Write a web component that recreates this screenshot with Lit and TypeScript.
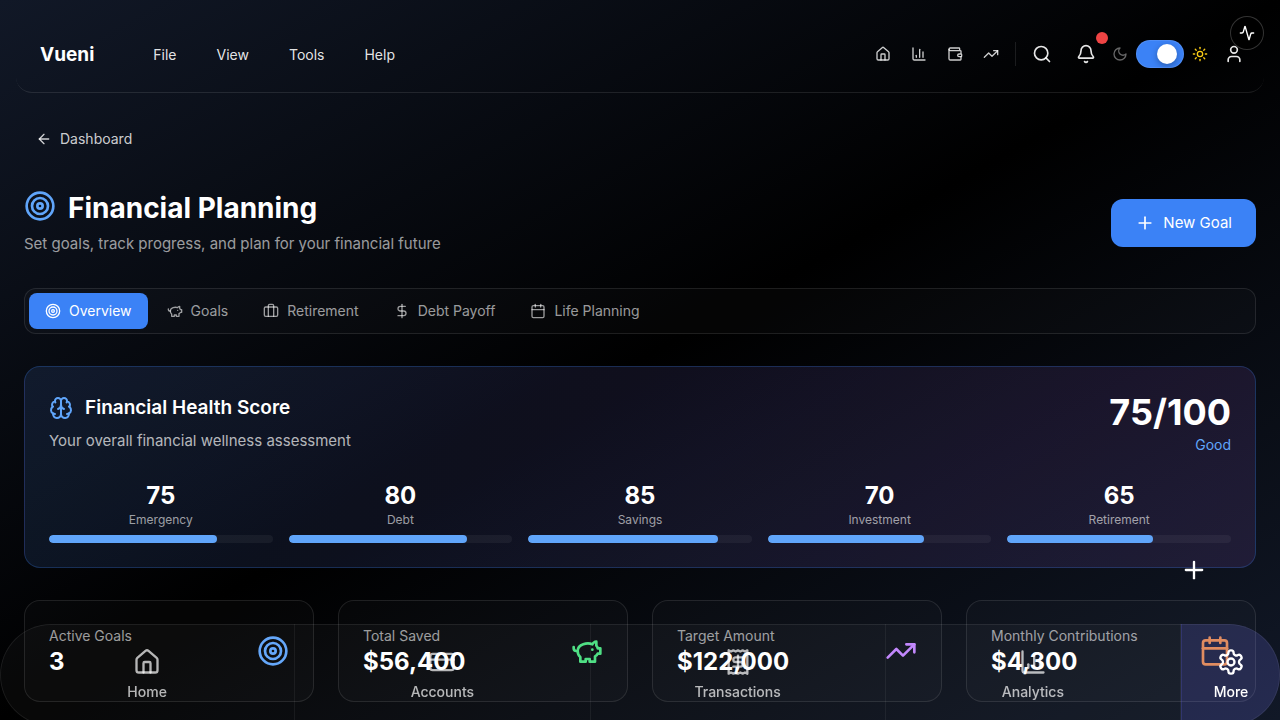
import { LitElement, html, css, svg } from "lit";
import { customElement, property, state } from "lit/decorators.js";
import { styleMap } from "lit/directives/style-map.js";
import { classMap } from "lit/directives/class-map.js";

const target = svg`<circle cx="12" cy="12" r="10"/><circle cx="12" cy="12" r="6"/><circle cx="12" cy="12" r="2"/>`;
const piggy = svg`<path d="M19 5c-1.5 0-2.8 1.4-3 2-3.5-1.5-11-.3-11 5 0 1.8 0 3 2 4.5V20h4v-2h3v2h4v-4c1-.5 1.7-1 2-2h2v-4h-2c0-1-.5-1.5-1-2V5z"/><path d="M2 9v1c0 1.1.9 2 2 2h1"/><path d="M16 11h.01"/>`;
const calendar = svg`<path d="M8 2v4"/><path d="M16 2v4"/><rect width="18" height="18" x="3" y="4" rx="2"/><path d="M3 10h18"/>`;

const ICONS: Record<string, unknown> = {
  target,
  piggy,
  calendar,
  home: svg`<path d="M15 21v-8a1 1 0 0 0-1-1h-4a1 1 0 0 0-1 1v8"/><path d="M3 10a2 2 0 0 1 .709-1.528l7-5.999a2 2 0 0 1 2.582 0l7 5.999A2 2 0 0 1 21 10v9a2 2 0 0 1-2 2H5a2 2 0 0 1-2-2z"/>`,
  chart: svg`<path d="M3 3v16a2 2 0 0 0 2 2h16"/><path d="M18 17V9"/><path d="M13 17V5"/><path d="M8 17v-3"/>`,
  wallet: svg`<path d="M19 7V4a1 1 0 0 0-1-1H5a2 2 0 0 0 0 4h15a1 1 0 0 1 1 1v4h-3a2 2 0 0 0 0 4h3a1 1 0 0 0 1-1v-2a1 1 0 0 0-1-1"/><path d="M3 5v14a2 2 0 0 0 2 2h15a1 1 0 0 0 1-1v-4"/>`,
  trend: svg`<polyline points="22 7 13.5 15.5 8.5 10.5 2 17"/><polyline points="16 7 22 7 22 13"/>`,
  search: svg`<circle cx="11" cy="11" r="8"/><path d="m21 21-4.3-4.3"/>`,
  bell: svg`<path d="M10.268 21a2 2 0 0 0 3.464 0"/><path d="M3.262 15.326A1 1 0 0 0 4 17h16a1 1 0 0 0 .74-1.673C19.41 13.956 18 12.499 18 8A6 6 0 0 0 6 8c0 4.499-1.411 5.956-2.738 7.326"/>`,
  moon: svg`<path d="M12 3a6 6 0 0 0 9 9 9 9 0 1 1-9-9Z"/>`,
  sun: svg`<circle cx="12" cy="12" r="4"/><path d="M12 2v2"/><path d="M12 20v2"/><path d="m4.93 4.93 1.41 1.41"/><path d="m17.66 17.66 1.41 1.41"/><path d="M2 12h2"/><path d="M20 12h2"/><path d="m6.34 17.66-1.41 1.41"/><path d="m19.07 4.93-1.41 1.41"/>`,
  user: svg`<path d="M19 21v-2a4 4 0 0 0-4-4H9a4 4 0 0 0-4 4v2"/><circle cx="12" cy="7" r="4"/>`,
  activity: svg`<path d="M22 12h-2.48a2 2 0 0 0-1.93 1.46l-2.35 8.36a.25.25 0 0 1-.48 0L9.24 2.18a.25.25 0 0 0-.48 0l-2.35 8.36A2 2 0 0 1 4.49 12H2"/>`,
  back: svg`<path d="m12 19-7-7 7-7"/><path d="M19 12H5"/>`,
  plus: svg`<path d="M5 12h14"/><path d="M12 5v14"/>`,
  briefcase: svg`<path d="M16 20V4a2 2 0 0 0-2-2h-4a2 2 0 0 0-2 2v16"/><rect width="20" height="14" x="2" y="6" rx="2"/>`,
  dollar: svg`<path d="M12 2v20"/><path d="M17 5H9.5a3.5 3.5 0 0 0 0 7h5a3.5 3.5 0 0 1 0 7H6"/>`,
  brain: svg`<path d="M12 5a3 3 0 1 0-5.997.125 4 4 0 0 0-2.526 5.77 4 4 0 0 0 .556 6.588A4 4 0 1 0 12 18Z"/><path d="M12 5a3 3 0 1 1 5.997.125 4 4 0 0 1 2.526 5.77 4 4 0 0 1-.556 6.588A4 4 0 1 1 12 18Z"/><path d="M15 13a4.5 4.5 0 0 1-3-4 4.5 4.5 0 0 1-3 4"/><path d="M17.599 6.5a3 3 0 0 0 .399-1.375"/><path d="M6.003 5.125A3 3 0 0 0 6.401 6.5"/><path d="M3.477 10.896a4 4 0 0 1 .585-.396"/><path d="M19.938 10.5a4 4 0 0 1 .585.396"/><path d="M6 18a4 4 0 0 1-1.967-.516"/><path d="M19.967 17.484A4 4 0 0 1 18 18"/>`,
  card: svg`<rect width="20" height="14" x="2" y="5" rx="2"/><path d="M2 10h20"/>`,
  receipt: svg`<path d="M4 2v20l2-1 2 1 2-1 2 1 2-1 2 1 2-1 2 1V2l-2 1-2-1-2 1-2-1-2 1-2-1-2 1Z"/><path d="M16 8h-6a2 2 0 1 0 0 4h4a2 2 0 1 1 0 4H8"/><path d="M12 17.5v-11"/>`,
  settings: svg`<path d="M12.22 2h-.44a2 2 0 0 0-2 2v.18a2 2 0 0 1-1 1.73l-.43.25a2 2 0 0 1-2 0l-.15-.08a2 2 0 0 0-2.73.73l-.22.38a2 2 0 0 0 .73 2.73l.15.1a2 2 0 0 1 1 1.72v.51a2 2 0 0 1-1 1.74l-.15.09a2 2 0 0 0-.73 2.73l.22.38a2 2 0 0 0 2.73.73l.15-.08a2 2 0 0 1 2 0l.43.25a2 2 0 0 1 1 1.73V20a2 2 0 0 0 2 2h.44a2 2 0 0 0 2-2v-.18a2 2 0 0 1 1-1.73l.43-.25a2 2 0 0 1 2 0l.15.08a2 2 0 0 0 2.73-.73l.22-.39a2 2 0 0 0-.73-2.73l-.15-.08a2 2 0 0 1-1-1.74v-.5a2 2 0 0 1 1-1.74l.15-.09a2 2 0 0 0 .73-2.73l-.22-.38a2 2 0 0 0-2.73-.73l-.15.08a2 2 0 0 1-2 0l-.43-.25a2 2 0 0 1-1-1.73V4a2 2 0 0 0-2-2z"/><circle cx="12" cy="12" r="3"/>`,
};

@customElement("line-icon")
class LineIcon extends LitElement {
  @property() name = "";
  @property({ type: Number }) size = 16;

  static styles = css`
    :host { display: inline-flex; flex: none; }
    svg {
      display: block;
      fill: none;
      stroke: currentColor;
      stroke-width: 2;
      stroke-linecap: round;
      stroke-linejoin: round;
    }
  `;

  render() {
    return html`<svg width=${this.size} height=${this.size} viewBox="0 0 24 24" aria-hidden="true">${ICONS[this.name]}</svg>`;
  }
}

const MENUS = ["File", "View", "Tools", "Help"];
const SHORTCUTS = [
  ["home", "Home"],
  ["chart", "Analytics"],
  ["wallet", "Accounts"],
  ["trend", "Trends"],
];
const TABS = [
  ["target", "Overview"],
  ["piggy", "Goals"],
  ["briefcase", "Retirement"],
  ["dollar", "Debt Payoff"],
  ["calendar", "Life Planning"],
];
const METRICS: [string, number][] = [
  ["Emergency", 75],
  ["Debt", 80],
  ["Savings", 85],
  ["Investment", 70],
  ["Retirement", 65],
];
const STATS = [
  ["Active Goals", "3", "target", "blue"],
  ["Total Saved", "$56,400", "piggy", "green"],
  ["Target Amount", "$122,000", "trend", "purple"],
  ["Monthly Contributions", "$4,300", "calendar", "orange"],
];
const DOCK = [
  ["home", "Home"],
  ["card", "Accounts"],
  ["receipt", "Transactions"],
  ["chart", "Analytics"],
];

@customElement("app-root")
class AppRoot extends LitElement {
  @state() private tab = "Overview";
  @state() private light = true;

  static styles = css`
    :host {
      display: block;
      min-height: 100vh;
      box-sizing: border-box;
      color: #fff;
      font-family: Inter, "Liberation Sans", sans-serif;
      font-size: 14px;
      line-height: 20px;
      background: linear-gradient(to bottom right, #111827, #000 50%, #111827);
    }
    *, *::before { box-sizing: border-box; }
    h1, h2, p, dl, dd, dt { margin: 0; }
    button {
      display: inline-flex;
      align-items: center;
      justify-content: center;
      padding: 0;
      border: 0;
      background: none;
      color: inherit;
      font: inherit;
      cursor: pointer;
    }
    a { color: inherit; text-decoration: none; }

    .bar {
      display: flex;
      align-items: center;
      justify-content: space-between;
      margin: 0 16px;
      padding: 32px 8px 16px 24px;
      border-bottom: 1px solid rgba(255, 255, 255, 0.1);
      border-radius: 0 0 16px 16px;
    }
    .left, .menus, .right, .shortcuts, .theme { display: flex; align-items: center; }
    .left { gap: 43px; padding-top: 2px; }
    .brand { font-size: 19px; line-height: 28px; font-weight: 700; }
    .menus { gap: 8px; }
    .menus button { height: 36px; padding: 0 16px; color: rgba(255, 255, 255, 0.9); }
    .shortcuts { gap: 4px; padding-right: 8px; margin-right: 4px; border-right: 1px solid rgba(255, 255, 255, 0.1); height: 24px; }
    .shortcuts button { width: 32px; height: 32px; color: rgba(255, 255, 255, 0.8); }
    .square { position: relative; width: 44px; height: 44px; color: rgba(255, 255, 255, 0.9); }
    .dot { position: absolute; top: 0; right: 0; width: 12px; height: 12px; border-radius: 6px; background: #ef4444; }
    .theme { gap: 8px; padding: 0 4px; }
    .moon { color: rgba(255, 255, 255, 0.4); }
    .sun { color: #facc15; }
    .switch {
      appearance: none;
      display: flex;
      align-items: center;
      width: 48px;
      height: 28px;
      margin: 0;
      padding: 0 4px;
      border: 1px solid rgba(255, 255, 255, 0.1);
      border-radius: 14px;
      background: #374151;
    }
    .switch:checked { background: #3b82f6; justify-content: flex-end; padding-right: 6px; }
    .switch::before { content: ""; width: 20px; height: 20px; border-radius: 10px; background: #fff; box-shadow: 0 2px 6px rgba(0, 0, 0, 0.3); }
    .pulse {
      position: fixed;
      top: 16px;
      right: 16px;
      width: 34px;
      height: 34px;
      border: 1px solid rgba(255, 255, 255, 0.2);
      border-radius: 17px;
      background: #000;
    }

    main { padding: 28px 24px 18px; }
    .back { display: flex; width: fit-content; align-items: center; gap: 8px; height: 36px; padding: 0 12px; color: rgba(255, 255, 255, 0.8); }
    .head { display: flex; align-items: center; justify-content: space-between; margin-top: 33px; }
    .title { display: flex; align-items: center; gap: 12px; }
    .head .title { align-items: flex-start; }
    h1 { font-size: 28px; line-height: 36px; font-weight: 700; }
    .blue { color: #60a5fa; }
    .green { color: #4ade80; }
    .purple { color: #c084fc; }
    .orange { color: #fb923c; }
    .lead { margin-top: 6px; font-size: 15px; line-height: 24px; color: rgba(255, 255, 255, 0.6); }
    .new { gap: 8px; height: 48px; padding: 0 24px; border-radius: 12px; background: #3b82f6; font-size: 15px; }

    .tabs {
      display: flex;
      gap: 3px;
      margin-top: 32px;
      padding: 4px;
      border: 1px solid rgba(255, 255, 255, 0.1);
      border-radius: 12px;
      background: rgba(255, 255, 255, 0.02);
    }
    .tabs button { gap: 8px; height: 36px; padding: 0 16px; border-radius: 8px; color: rgba(255, 255, 255, 0.6); }
    .tabs .on { background: #3b82f6; color: #fff; }

    .health {
      margin-top: 32px;
      padding: 24px;
      border: 1px solid rgba(59, 130, 246, 0.25);
      border-radius: 16px;
      background: linear-gradient(to right, rgba(59, 130, 246, 0.1), rgba(168, 85, 247, 0.1)), rgba(255, 255, 255, 0.02);
    }
    .summary { display: flex; justify-content: space-between; }
    .summary .title { margin-top: 2px; }
    h2 { font-size: 19px; line-height: 30px; font-weight: 600; }
    .health .lead { color: rgba(255, 255, 255, 0.7); }
    .score { text-align: right; }
    .total { font-size: 36px; line-height: 42px; font-weight: 700; }
    .grade { margin-top: 2px; color: #60a5fa; }
    .metrics { display: grid; grid-template-columns: repeat(5, 1fr); gap: 16px; margin-top: 24px; }
    .metric { display: flex; flex-direction: column; text-align: center; }
    .metric dd { font-size: 24px; line-height: 34px; font-weight: 700; }
    .metric dt { order: 1; font-size: 12px; line-height: 14px; color: rgba(255, 255, 255, 0.6); }
    .track { order: 2; height: 8px; margin-top: 8px; border-radius: 4px; overflow: hidden; background: rgba(255, 255, 255, 0.05); }
    .fill { height: 8px; border-radius: 4px; background: #60a5fa; }

    .stats { display: grid; grid-template-columns: repeat(4, 1fr); gap: 24px; margin-top: 32px; }
    .stat {
      display: flex;
      align-items: center;
      justify-content: space-between;
      padding: 24px;
      border: 1px solid rgba(255, 255, 255, 0.1);
      border-radius: 16px;
      background: rgba(255, 255, 255, 0.02);
    }
    .label { line-height: 22px; color: rgba(255, 255, 255, 0.6); }
    .value { font-size: 24px; line-height: 30px; font-weight: 700; }

    .fab { position: fixed; right: 58px; bottom: 122px; width: 56px; height: 56px; }
    .dock {
      position: fixed;
      left: 0;
      right: 0;
      bottom: -6px;
      display: grid;
      grid-template-columns: repeat(4, 1fr) 99px;
      height: 102px;
      box-shadow: inset 0 0 0 1px rgba(255, 255, 255, 0.08);
      border-radius: 51px;
      overflow: hidden;
      background: rgba(255, 255, 255, 0.03);
    }
    .dock a {
      display: flex;
      flex-direction: column;
      align-items: center;
      gap: 6px;
      padding-top: 24px;
      border-right: 1px solid rgba(255, 255, 255, 0.06);
      color: rgba(255, 255, 255, 0.7);
      font-weight: 500;
    }
    .dock .more { border-right: 0; border-left: 1px solid rgba(99, 102, 241, 0.2); background: rgba(99, 102, 241, 0.18); color: #fff; }
  `;

  render() {
    return html`
      <header class="bar">
        <div class="left">
          <a class="brand" href="#">Vueni</a>
          <nav class="menus">${MENUS.map((m) => html`<button>${m}</button>`)}</nav>
        </div>
        <div class="right">
          <div class="shortcuts">
            ${SHORTCUTS.map(([icon, label]) => html`<button aria-label=${label}><line-icon name=${icon}></line-icon></button>`)}
          </div>
          <button class="square" aria-label="Search"><line-icon name="search" size="20"></line-icon></button>
          <button class="square" aria-label="Notifications"><line-icon name="bell" size="20"></line-icon><span class="dot"></span></button>
          <div class="theme">
            <line-icon class="moon" name="moon"></line-icon>
            <input class="switch" type="checkbox" role="switch" aria-label="Theme" .checked=${this.light}
              @change=${(e: Event) => (this.light = (e.target as HTMLInputElement).checked)} />
            <line-icon class="sun" name="sun"></line-icon>
          </div>
          <button class="square" aria-label="Profile"><line-icon name="user" size="20"></line-icon></button>
        </div>
      </header>

      <main>
        <a class="back" href="#"><line-icon name="back"></line-icon>Dashboard</a>
        <div class="head">
          <div>
            <div class="title"><line-icon class="blue" name="target" size="32"></line-icon><h1>Financial Planning</h1></div>
            <p class="lead">Set goals, track progress, and plan for your financial future</p>
          </div>
          <button class="new"><line-icon name="plus" size="20"></line-icon>New Goal</button>
        </div>

        <div class="tabs" role="tablist">
          ${TABS.map(([icon, label]) => html`
            <button role="tab" aria-selected=${this.tab === label} class=${classMap({ on: this.tab === label })}
              @click=${() => (this.tab = label)}><line-icon name=${icon}></line-icon>${label}</button>`)}
        </div>

        <section class="health">
          <div class="summary">
            <div>
              <div class="title"><line-icon class="blue" name="brain" size="24"></line-icon><h2>Financial Health Score</h2></div>
              <p class="lead">Your overall financial wellness assessment</p>
            </div>
            <div class="score"><p class="total">75/100</p><p class="grade">Good</p></div>
          </div>
          <dl class="metrics">
            ${METRICS.map(([label, value]) => html`
              <div class="metric">
                <dt>${label}</dt>
                <dd>${value}</dd>
                <div class="track"><div class="fill" style=${styleMap({ width: `${value}%` })}></div></div>
              </div>`)}
          </dl>
        </section>

        <section class="stats">
          ${STATS.map(([label, value, icon, tone]) => html`
            <article class="stat">
              <div><p class="label">${label}</p><p class="value">${value}</p></div>
              <line-icon class=${tone} name=${icon} size="32"></line-icon>
            </article>`)}
        </section>
      </main>

      <button class="pulse" aria-label="Activity"><line-icon name="activity"></line-icon></button>
      <button class="fab" aria-label="Add"><line-icon name="plus" size="28"></line-icon></button>
      <nav class="dock">
        ${DOCK.map(([icon, label]) => html`<a href="#"><line-icon name=${icon} size="28"></line-icon>${label}</a>`)}
        <a class="more" href="#"><line-icon name="settings" size="28"></line-icon>More</a>
      </nav>
    `;
  }
}
